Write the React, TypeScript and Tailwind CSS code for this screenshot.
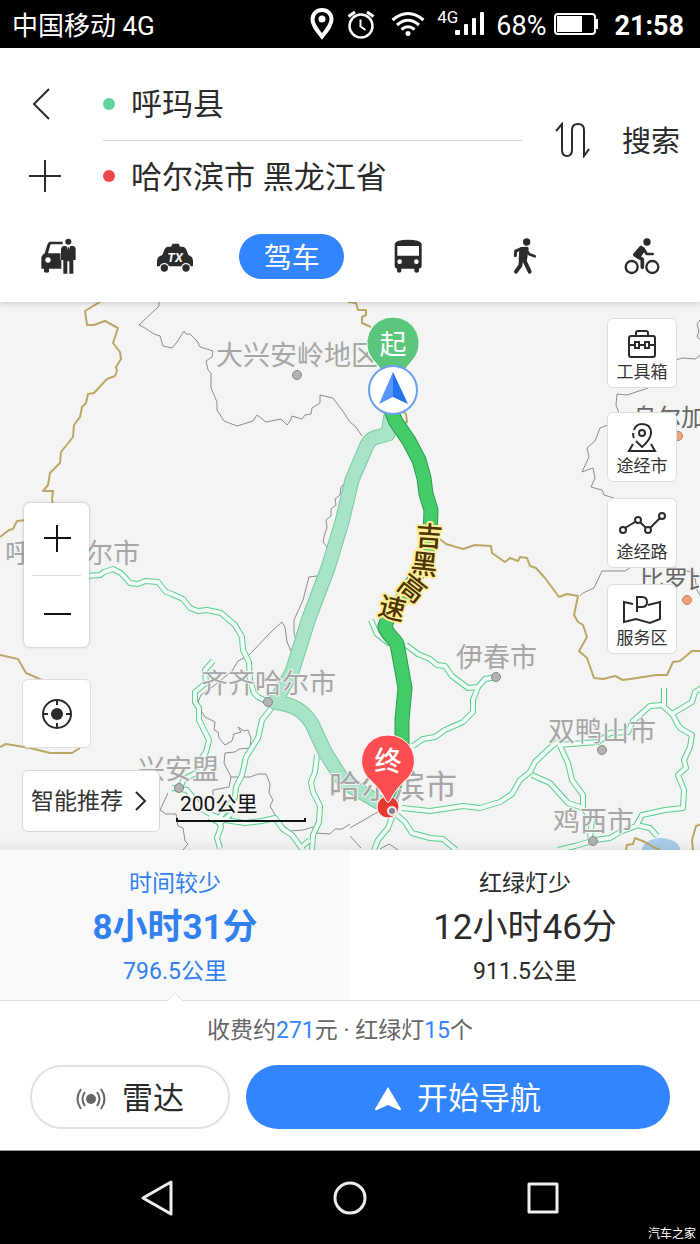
import { useState } from "react";
import type { ReactNode } from "react";

/* ================= TYPES ================= */

type Point = {
  x: number;
  y: number;
};

type CityLabel = Point & {
  name: string;
  size?: "lg" | "sm";
};

/* ================= MAP DATA ================= */

const provinceBorders = [
  "M100 302 85 311 87 325 94 325 105 321 118 328 113 343 120 352 121 359 116 367 117 371 115 376 107 379 94 393 88 394 86 403 82 407 80 417 74 425 73 437 61 452 60 463 50 473 48 485 43 491 53 491 52 500 54 508",
  "M26 520 17 521 13 529 9 530 0 537",
  "M0 655 18 659 26 673 42 680",
  "M0 747 6 744 30 748 50 753 72 753 80 748",
  "M348 302 356 303 358 310 366 310 366 315 362 317 362 323 371 327",
  "M398 408 406 414 407 422 403 424",
  "M436 536 446 544 463 549 475 545 491 546 492 553 505 562 510 558 518 561 520 557 527 558 530 566 536 568 545 578 559 597 567 594 578 596 574 615 578 622 583 625 587 637 579 651 587 658 594 678 603 679 615 676 623 680 637 678 656 675 667 675 673 662 680 661 692 651 700 651",
  "M626 850 627 845 633 844 635 838 645 842 653 847 660 850",
  "M693 850 692 840 696 826 702 824",
];

const cityBorders = [
  "M159 302 159 306 139 325 145 328 154 334 160 336 163 346 172 348 177 342 184 331 186 334 190 334 197 341 200 347 213 351 212 357 206 361 208 370 211 373 211 388 217 402 217 410 224 421 237 426 253 421 257 415 266 422 281 419 287 425 290 421 292 416 302 419 305 415 311 414 312 408 320 403 320 395 333 398 342 410 350 422 356 427 362 436",
  "M345 483 341 487 340 495 335 499 336 505 331 509 331 516 326 520 327 528 325 533 323 542 327 547 328 558",
  "M320 579 317 576 309 577 303 600 294 620 294 633 296 640 291 651 287 642 285 627 282 622 273 630 249 655 238 661 232 671 215 685 201 695 197 704 205 717 215 722 214 730 218 732 219 738 225 745 232 741 234 734 241 732 238 727 244 731 248 730 251 738 250 748 239 749 235 752 225 753 224 763 231 777 250 777 258 774 266 774 270 784 269 793 273 800 270 806 277 818",
  "M231 777 229 787 213 790 213 797",
  "M168 793 160 810 166 814 176 814 178 826 183 828 185 841 188 844 183 850",
  "M283 825 290 831 303 830 313 827 314 833 330 834 335 829 342 829 350 824",
  "M350 836 361 848M380 849 389 844 398 850",
  "M350 828 383 809",
  "M700 320 697 324 699 331 697 337 701 340M702 354 695 359 682 358 676 360",
  "M648 388 627 395 617 394 616 405 619 413",
  "M608 425 600 428 595 441 587 448 589 457 582 472 593 468 595 478 591 487 602 490 604 495 614 498",
  "M633 566 625 571 602 571 594 588 583 593 580 596M672 566 680 570 694 572 697 590 701 597",
];

const roads = [
  "M86 576 100 575 104 572 113 569 121 573 130 583 138 584 145 581 158 582 166 592 172 594 183 599 190 608 198 611 207 610 221 613 235 625 242 637 243 650 249 662 250 680 254 693 258 697 268 702",
  "M213 661 205 670 206 683 195 692 195 702 199 708 199 720 209 740 206 752 199 762 202 770 184 779 179 790",
  "M273 706 262 720 258 738 246 757 242 775 236 787 235 797 225 811 218 819 221 827 217 838 220 848",
  "M317 755 315 772 311 782 313 792 320 806 319 822 313 835 312 850",
  "M172 788 187 790 195 800 200 808 212 815 225 820 245 823 262 821 275 818 283 829 292 835 303 850",
  "M209 817 220 823 231 814M310 840 300 848",
  "M406 645 418 654 430 659 437 665 445 666 452 676 468 688 478 687 485 679 497 677",
  "M478 687 473 700 473 712 463 722 445 730 435 737 423 739 413 746",
  "M402 808 430 811 463 806 480 808 500 802 512 794 520 780 530 772 535 762 552 746 558 742",
  "M558 745 598 742 610 733 628 732 633 721 650 706 662 705 672 714 680 728 692 735 690 747 684 760 686 768 678 775 684 790 683 808 665 810 642 815 636 826 620 832 610 838 595 840 575 846 558 850",
  "M664 706 664 688M672 714 692 702 695 692 702 688",
  "M532 775 550 783 568 803 583 808",
  "M560 746 568 763 572 780 583 795 583 808 592 820 590 838",
  "M636 825 650 828 657 836",
  "M397 815 405 822 412 833 430 838 443 839 456 850",
  "M392 817 388 828 378 840 374 850",
  "M371 620 377 634 390 644",
];

const alternateRoute =
  "M391 415 388 434C376 438 372 436 367 445L352 480 342 522 328 568 309 618 292 672 275 702C292 705 302 708 312 724L325 752 344 782 380 803";

const mainRoute =
  "M391 410 396 422 409 441 419 460 424 478 426 494 431 510 430 535 426 560 405 595 388 618 385 626C386 634 394 638 397 644L400 660 405 688 402 720 402 752 390 804";

const cityLabels: CityLabel[] = [
  { name: "大兴安岭地区", x: 216, y: 365 },
  { name: "呼伦贝尔市", x: 5, y: 563 },
  { name: "齐齐哈尔市", x: 201, y: 693 },
  { name: "兴安盟", x: 138, y: 779 },
  { name: "伊春市", x: 456, y: 667 },
  { name: "双鸭山市", x: 548, y: 741 },
  { name: "鸡西市", x: 553, y: 831 },
  { name: "哈尔滨市", x: 329, y: 798, size: "lg" },
];

const foreignLabels: CityLabel[] = [
  { name: "乌尔加", x: 633, y: 426 },
  { name: "比罗比", x: 640, y: 588 },
];

const cityDots: Point[] = [
  { x: 297, y: 375 },
  { x: 268, y: 702 },
  { x: 179, y: 788 },
  { x: 496, y: 677 },
  { x: 602, y: 750 },
  { x: 593, y: 841 },
];

const foreignDots: Point[] = [
  { x: 678, y: 436 },
  { x: 687, y: 600 },
];

const highwayLabel = [
  { char: "吉", x: 429, y: 537, angle: 4 },
  { char: "黑", x: 424, y: 565, angle: 6 },
  { char: "高", x: 412, y: 589, angle: 38 },
  { char: "速", x: 392, y: 609, angle: 14 },
];

/* ================= STATUS BAR ================= */

const StatusBar = () => (
  <div className="flex h-12 shrink-0 items-center bg-black pr-4 pl-3 font-normal text-white">
    <span className="flex-1 pt-1 text-[26px]">中国移动 4G</span>

    <svg width="26" height="34" viewBox="0 0 26 34" fill="none">
      <path
        d="M13 3C7.500 3 3.500 7 3.500 12.300 3.500 18 8 23 13 29.500 18 23 22.500 18 22.500 12.300 22.500 7 18.500 3 13 3Z"
        stroke="white"
        strokeWidth="4"
      />
      <circle cx="13" cy="12" r="3.500" fill="white" />
    </svg>

    <svg className="ml-3" width="28" height="30" viewBox="0 0 28 30" fill="none" stroke="white">
      <circle cx="14" cy="17" r="11.500" strokeWidth="2.500" />
      <path d="M13.500 10.500V17.500L18.500 21" strokeWidth="2" />
      <path d="M1.500 7.500 8 3M26.500 7.500 20 3" strokeWidth="3" />
    </svg>

    <svg className="ml-4" width="34" height="26" viewBox="0 0 34 26" fill="none" stroke="white">
      <path d="M1.500 9Q17-4 32.500 9" strokeWidth="3" />
      <path d="M6 14Q17 4.500 28 14" strokeWidth="3" />
      <path d="M10.500 18.500Q17 13 23.500 18.500" strokeWidth="3" />
      <circle cx="17" cy="22.500" r="2.500" fill="white" stroke="none" />
    </svg>

    <div className="ml-3 flex">
      <span className="-mr-1 text-[17px] leading-3">4G</span>
      <svg width="30" height="26" viewBox="0 0 30 26" fill="white">
        <rect x="1" y="19" width="5" height="5" rx="1" />
        <rect x="10" y="13" width="4" height="11" rx="1" />
        <rect x="18" y="7" width="4" height="17" rx="1" />
        <rect x="26" y="1" width="4" height="23" rx="1" />
      </svg>
    </div>

    <span className="ml-3 pt-1 text-[27px]">68%</span>

    <svg className="ml-2" width="44" height="24" viewBox="0 0 44 24">
      <rect x="1" y="2" width="40" height="20" rx="3" fill="none" stroke="white" strokeWidth="2" />
      <rect x="3" y="4" width="25" height="16" fill="white" />
      <rect x="41" y="7" width="3" height="10" fill="white" />
    </svg>

    <span className="ml-4 pt-1 text-[27px] font-bold">21:58</span>
  </div>
);

/* ================= TRAVEL MODE ICONS ================= */

const PickupIcon = () => (
  <svg width="38" height="38" viewBox="116 262 114 114" fill="#2b2b2b">
    <path d="M147 276H187V284H151L143 311H183V357H146V367Q140 372 131 367V357H123V324Q123 318 133 311L142 282Z" />
    <circle cx="143" cy="331" r="8" fill="white" />
    <circle cx="204" cy="276" r="13" fill="white" />
    <circle cx="204" cy="276" r="9" />
    <path d="M191 289H217Q226 290 226 299V331H219V372H207V335H201V372H189V331H182V299Q183 290 191 289Z" stroke="white" strokeWidth="3" paintOrder="stroke" />
    <path d="M198 289 204 305 210 289Z" fill="white" />
    <path d="M202 293H206V303H202Z" />
  </svg>
);

const TaxiIcon = () => (
  <svg width="38" height="38" viewBox="468 262 114 114" fill="#2b2b2b">
    <path d="M518 282H536L540 291H549Q556 292 559 300L565 316Q579 321 579 334V350H471V334Q471 321 487 316L493 300Q496 292 503 291H513Z" />
    <circle cx="493" cy="355" r="15" fill="white" />
    <circle cx="558" cy="355" r="15" fill="white" />
    <circle cx="493" cy="355" r="11" />
    <circle cx="558" cy="355" r="11" />
    <text x="525" y="336" textAnchor="middle" fill="white" fontSize="38" className="font-bold italic">
      TX
    </text>
  </svg>
);

const BusIcon = () => (
  <svg width="38" height="38" viewBox="118 262 114 114" fill="#2b2b2b">
    <path
      fillRule="evenodd"
      d="M135 282Q140 270 175 270 211 270 216 282V350Q216 355 208 357V364Q208 369 201 369 194 369 194 364V357H155V364Q155 369 148 369 142 369 142 364V357Q135 355 135 350ZM143 289V318H208V289Z"
    />
    <circle cx="150" cy="336" r="7" fill="white" />
    <circle cx="200" cy="336" r="7" fill="white" />
  </svg>
);

const WalkIcon = () => (
  <svg
    width="38"
    height="38"
    viewBox="470 262 114 114"
    fill="none"
    stroke="#2b2b2b"
    strokeLinecap="round"
    strokeLinejoin="round"
  >
    <circle cx="532" cy="277" r="11" fill="#2b2b2b" stroke="none" />
    <path d="M516 298 532 297 527 330 514 330Z" fill="#2b2b2b" strokeWidth="12" />
    <path d="M517 297 499 304 498 318" strokeWidth="9" />
    <path d="M531 301 540 314 556 320" strokeWidth="8" />
    <path d="M515 332 513 348 500 366M525 332 541 366" strokeWidth="12" />
  </svg>
);

const BikeIcon = () => (
  <svg
    width="38"
    height="38"
    viewBox="818 262 114 114"
    fill="none"
    stroke="#2b2b2b"
    strokeLinecap="round"
    strokeLinejoin="round"
  >
    <circle cx="890" cy="277" r="11" fill="#2b2b2b" stroke="none" />
    <circle cx="844" cy="352" r="18" strokeWidth="7" />
    <circle cx="906" cy="352" r="18" strokeWidth="7" />
    <path d="M872 293 853 315 865 322 880 301Z" fill="#2b2b2b" strokeWidth="10" />
    <path d="M879 296 889 313H907" strokeWidth="8" />
    <path d="M856 317 876 329V353" strokeWidth="11" />
  </svg>
);

const travelModes: { id: string; icon?: ReactNode; text?: string }[] = [
  { id: "pickup", icon: <PickupIcon /> },
  { id: "taxi", icon: <TaxiIcon /> },
  { id: "drive", text: "驾车" },
  { id: "bus", icon: <BusIcon /> },
  { id: "walk", icon: <WalkIcon /> },
  { id: "bike", icon: <BikeIcon /> },
];

/* ================= SEARCH HEADER ================= */

const SearchHeader = () => {
  const [origin, setOrigin] = useState("呼玛县");
  const [destination, setDestination] = useState("哈尔滨市 黑龙江省");

  const swapPlaces = () => {
    setOrigin(destination);
    setDestination(origin);
  };

  return (
    <header className="relative z-10 shrink-0 bg-white pt-5 text-[#2b2b2b] shadow-[0_1px_6px_rgba(0,0,0,0.2)]">
      <div className="flex h-[144px] items-center pr-5">
        <div className="flex h-full w-[103px] flex-col pl-7">
          <button aria-label="返回" className="flex flex-1 items-center">
            <svg width="30" height="34" viewBox="0 0 30 34" fill="none" stroke="#2b2b2b" strokeWidth="2">
              <path d="M21 2 6 17 21 32" />
            </svg>
          </button>
          <button aria-label="添加途经点" className="flex flex-1 items-center">
            <svg width="34" height="34" viewBox="0 0 34 34" fill="none" stroke="#2b2b2b" strokeWidth="2">
              <path d="M17 1V33M1 17H33" />
            </svg>
          </button>
        </div>

        <div className="flex h-full min-w-0 flex-1 flex-col text-[31px]">
          <label className="flex flex-1 items-center gap-4 border-b border-[#d6d6d6]">
            <span className="h-3 w-3 shrink-0 rounded-full bg-[#66d19e]" />
            <input
              aria-label="起点"
              className="w-full min-w-0 pt-[3px] outline-none"
              value={origin}
              onChange={(e) => setOrigin(e.target.value)}
            />
          </label>
          <label className="flex flex-1 items-center gap-4">
            <span className="h-3 w-3 shrink-0 rounded-full bg-[#f04848]" />
            <input
              aria-label="终点"
              className="w-full min-w-0 pt-[3px] outline-none"
              value={destination}
              onChange={(e) => setDestination(e.target.value)}
            />
          </label>
        </div>

        <button aria-label="交换起终点" className="ml-8" onClick={swapPlaces}>
          <svg width="36" height="36" viewBox="0 0 36 36" fill="none" stroke="#2b2b2b" strokeWidth="2">
            <path d="M2 9 8 2V28Q8 34 13 34 18 34 18 28V8Q18 2 24 2 30 2 30 8V34L35 27" />
          </svg>
        </button>
        <button className="ml-8 pt-1.5 text-[29px]">搜索</button>
      </div>

      <nav className="grid h-[90px] grid-cols-6 items-center justify-items-center pb-0.5">
        {travelModes.map((mode) =>
          mode.text ? (
            <button
              key={mode.id}
              className="h-[45px] w-[105px] rounded-full bg-[#3385ff] pt-1.5 text-[28px] leading-none text-white"
            >
              {mode.text}
            </button>
          ) : (
            <button key={mode.id} aria-label={mode.id}>
              {mode.icon}
            </button>
          )
        )}
      </nav>
    </header>
  );
};

/* ================= MAP CANVAS ================= */

const MapCanvas = () => (
  <svg
    className="absolute inset-0 h-full w-full"
    viewBox="0 302 700 548"
    preserveAspectRatio="xMidYMid slice"
    fill="none"
    strokeLinejoin="round"
  >
    <ellipse cx="661" cy="850" rx="19" ry="12" fill="#a9cdea" />

    {cityBorders.map((d) => (
      <path key={d} d={d} stroke="#8c8c8c" strokeWidth="1" />
    ))}
    {provinceBorders.map((d) => (
      <path key={d} d={d} stroke="#b9a865" strokeWidth="2" />
    ))}

    {/* DOUBLE LINE ROADS */}
    {roads.map((d) => (
      <path key={d} d={d} stroke="#55cf8c" strokeWidth="6" />
    ))}
    {roads.map((d) => (
      <path key={d} d={d} stroke="#f4faf6" strokeWidth="4" />
    ))}

    {/* ROUTES */}
    <path d={alternateRoute} stroke="#7cc8a4" strokeWidth="15" />
    <path d={alternateRoute} stroke="#a8e4c6" strokeWidth="13" />
    <path d={mainRoute} stroke="#2c9a52" strokeWidth="15" />
    <path d={mainRoute} stroke="#44cc6a" strokeWidth="13" />

    {/* CITIES */}
    {cityDots.map((dot) => (
      <circle key={dot.x} cx={dot.x} cy={dot.y} r="4.500" fill="#b3b3b3" stroke="#858585" />
    ))}
    {foreignDots.map((dot) => (
      <circle key={dot.x} cx={dot.x} cy={dot.y} r="4.500" fill="#f0a478" stroke="#b98060" />
    ))}
    {cityLabels.map((label) => (
      <text
        key={label.name}
        x={label.x}
        y={label.y}
        fill="#a6a6a6"
        stroke="#f4f4f4"
        strokeWidth="2"
        paintOrder="stroke"
        className={label.size === "lg" ? "text-[32px]" : "text-[27px]"}
      >
        {label.name}
      </text>
    ))}
    {foreignLabels.map((label) => (
      <text
        key={label.name}
        x={label.x}
        y={label.y}
        fill="#666666"
        stroke="#f4f4f4"
        strokeWidth="2"
        paintOrder="stroke"
        className="text-[24px]"
      >
        {label.name}
      </text>
    ))}

    {/* HIGHWAY NAME */}
    {highwayLabel.map((item) => (
      <text
        key={item.char}
        x={item.x}
        y={item.y}
        transform={`rotate(${item.angle} ${item.x} ${item.y})`}
        textAnchor="middle"
        dominantBaseline="central"
        fill="#4d3500"
        stroke="#ffee99"
        strokeWidth="4"
        paintOrder="stroke"
        className="text-[27px] font-medium"
      >
        {item.char}
      </text>
    ))}

    {/* START */}
    <path
      d="M393 317A26 26 0 0 0 374 361L393 384 412 361A26 26 0 0 0 393 317Z"
      fill="#5cc77c"
      stroke="white"
    />
    <text x="393" y="354" textAnchor="middle" fill="white" className="text-[27px]">
      起
    </text>
    <circle cx="393" cy="390" r="24" fill="white" stroke="#6b9fec" strokeWidth="2" />
    <path d="M393 372V397L379 404Z" fill="#5795fb" />
    <path d="M393 372V397L408 404Z" fill="#2673f0" />

    {/* END */}
    <circle cx="388" cy="807" r="11" fill="#e8382f" stroke="white" />
    <circle cx="392" cy="811" r="4" fill="#8a7d8c" stroke="#eeeeee" strokeWidth="2" />
    <path
      d="M388 735A26 26 0 0 0 367 777Q381 789 386 801 388 804 390 801 395 789 409 777A26 26 0 0 0 388 735Z"
      fill="#fc4d50"
      stroke="white"
    />
    <text x="388" y="771" textAnchor="middle" fill="white" className="text-[27px] font-medium">
      终
    </text>

    {/* SCALE */}
    <text
      x="180"
      y="811"
      fill="#111111"
      stroke="#f4f4f4"
      strokeWidth="3"
      paintOrder="stroke"
      className="text-[21px]"
    >
      200公里
    </text>
    <path d="M177 818V821H305V818" stroke="#111111" strokeWidth="2" strokeLinejoin="miter" />
  </svg>
);

/* ================= MAP TOOLS ================= */

const ToolboxIcon = () => (
  <svg width="36" height="32" viewBox="0 0 36 32" fill="none" stroke="#2b2b2b" strokeWidth="2">
    <rect x="5" y="8" width="26" height="21" rx="2" />
    <path d="M12 8V5Q12 3 14 3H22Q24 3 24 5V8M5 17H11M15 17H21M25 17H31" />
    <rect x="11" y="14" width="4" height="6" />
    <rect x="21" y="14" width="4" height="6" />
  </svg>
);

const ViaCityIcon = () => (
  <svg width="36" height="32" viewBox="0 0 36 32" fill="none" stroke="#2b2b2b" strokeWidth="2">
    <path d="M10 8Q12 2 18 2 27 2 27 11 27 17 18 25L12 19M9 11Q9 14 10 16" />
    <circle cx="18" cy="11" r="3" />
    <path d="M9 22 5 29H31L27 22" />
  </svg>
);

const ViaRoadIcon = () => (
  <svg width="48" height="32" viewBox="0 0 48 32" fill="none" stroke="#2b2b2b" strokeWidth="2">
    <circle cx="5" cy="22" r="3" />
    <circle cx="20" cy="12" r="3" />
    <circle cx="30" cy="22" r="3" />
    <circle cx="44" cy="8" r="3" />
    <path d="M7 20 17 14M22 14 28 20M32 20 42 10" />
  </svg>
);

const ServiceIcon = () => (
  <svg width="42" height="32" viewBox="0 0 42 32" fill="none" stroke="#2b2b2b" strokeWidth="2">
    <path d="M12 10 3 8V28L15 25 29 29 39 25V8L27 11" />
    <path d="M16 18V3H21Q26 3 26 8 26 13 21 13H16" />
  </svg>
);

const mapTools = [
  { label: "工具箱", icon: <ToolboxIcon /> },
  { label: "途经市", icon: <ViaCityIcon /> },
  { label: "途经路", icon: <ViaRoadIcon /> },
  { label: "服务区", icon: <ServiceIcon /> },
];

const MapSection = () => (
  <main className="relative min-h-[548px] flex-1 overflow-hidden bg-[#f4f4f4]">
    <MapCanvas />

    {/* RIGHT SIDE */}
    <div className="absolute top-4 right-[23px] flex flex-col gap-4">
      {mapTools.map((tool) => (
        <button
          key={tool.label}
          className="flex h-[70px] w-[70px] flex-col items-center justify-center gap-0.5 rounded-md border border-[#dddddd] bg-white pt-1 text-[17px] leading-5 text-[#333333] first:mb-2"
        >
          {tool.icon}
          {tool.label}
        </button>
      ))}
    </div>

    {/* LEFT SIDE */}
    <div className="absolute bottom-[18px] left-[22px] flex flex-col items-start">
      <div className="ml-[2px] flex h-[144px] w-[65px] flex-col rounded-md bg-white px-2 shadow-[0_0_3px_rgba(0,0,0,0.3)]">
        <button aria-label="放大" className="flex flex-1 items-center justify-center border-b border-[#dddddd]">
          <svg width="28" height="28" viewBox="0 0 28 28" stroke="#111111" strokeWidth="2">
            <path d="M14 0V27M1 13H28" />
          </svg>
        </button>
        <button aria-label="缩小" className="flex flex-1 items-center justify-center">
          <svg width="28" height="28" viewBox="0 0 28 28" stroke="#111111" strokeWidth="2">
            <path d="M1 17H28" />
          </svg>
        </button>
      </div>

      <button
        aria-label="定位"
        className="mt-8 flex h-[69px] w-[69px] items-center justify-center rounded-md border border-[#dddddd] bg-white"
      >
        <svg width="32" height="32" viewBox="0 0 32 32" fill="none" stroke="#2b2b2b" strokeWidth="2">
          <circle cx="16" cy="16" r="14" />
          <circle cx="16" cy="16" r="6" fill="#2b2b2b" stroke="none" />
          <path d="M16 2V7M16 25V30M2 16H7M25 16H30" />
        </svg>
      </button>

      <button className="mt-[22px] flex h-[62px] w-[138px] items-center gap-2.5 rounded-md border border-[#d8d8d8] bg-white pl-2 text-[23px] text-[#333333]">
        <span className="pt-0.5">智能推荐</span>
        <svg width="14" height="22" viewBox="0 0 14 22" fill="none" stroke="#2b2b2b" strokeWidth="2">
          <path d="M3 2 12 11 3 20" />
        </svg>
      </button>
    </div>

    <div className="absolute inset-x-0 bottom-0 h-3 bg-gradient-to-t from-black/5 to-transparent" />
  </main>
);

/* ================= ROUTE PANEL ================= */

const routeOptions = [
  { label: "时间较少", time: "8小时31分", distance: "796.5公里" },
  { label: "红绿灯少", time: "12小时46分", distance: "911.5公里" },
];

const RoutePanel = () => {
  const [active, setActive] = useState(0);

  return (
    <section className="shrink-0 border-b border-[#999999] bg-white text-[23px]">
      <div className="grid grid-cols-2 border-b border-[#e0e0e0]">
        {routeOptions.map((option, index) => (
          <button
            key={option.label}
            onClick={() => setActive(index)}
            className={`relative flex h-[150px] flex-col items-center justify-center pt-[5px] leading-8 ${
              index === active ? "bg-[#f8f9f9] text-[#3280f0]" : "text-[#2b2b2b]"
            }`}
          >
            <span>{option.label}</span>
            <span
              className={`my-1 text-[35px] leading-[48px] ${index === active ? "font-bold" : ""}`}
            >
              {option.time}
            </span>
            <span>{option.distance}</span>

            {index === active && (
              <svg
                className="absolute -bottom-px left-1/2 -translate-x-1/2"
                width="16"
                height="9"
                viewBox="0 0 16 9"
              >
                <path d="M0 9 8 1 16 9" fill="white" stroke="#e0e0e0" />
              </svg>
            )}
          </button>
        ))}
      </div>

      <p className="pt-[14px] pr-5 text-center leading-8 text-[#666666]">
        收费约<span className="text-[#3385ff]">271</span>元 · 红绿灯
        <span className="text-[#3385ff]">15</span>个
      </p>

      <div className="flex gap-4 px-[30px] pt-[18px] pb-[21px] text-[31px] leading-none">
        <button className="flex h-16 w-[200px] items-center justify-center gap-4 rounded-full border-2 border-[#e2e2e2] pt-[3px] text-[#2b2b2b]">
          <svg width="30" height="24" viewBox="0 0 30 24" fill="none" stroke="#666666" strokeWidth="2">
            <circle cx="15" cy="12" r="5" fill="#666666" stroke="none" />
            <path d="M9 5Q4 12 9 19M21 5Q26 12 21 19M5 2Q-2 12 5 22M25 2Q32 12 25 22" />
          </svg>
          雷达
        </button>
        <button className="flex h-16 flex-1 items-center justify-center gap-4 rounded-full bg-[#3385ff] pt-[3px] text-white">
          <svg width="26" height="26" viewBox="0 0 26 26" fill="white">
            <path d="M13 1 26 23Q26 25 24 24L13 19 2 24Q0 25 0 23Z" />
          </svg>
          开始导航
        </button>
      </div>
    </section>
  );
};

/* ================= SYSTEM NAVIGATION ================= */

const SystemNav = () => (
  <footer className="relative h-[93px] shrink-0 bg-black">
    <div className="grid h-full grid-cols-3 items-center justify-items-center px-[60px]">
      <button aria-label="后退">
        <svg width="36" height="40" viewBox="0 0 36 40" fill="none" stroke="#eeeeee" strokeWidth="3" strokeLinejoin="round">
          <path d="M32 4V36L4 20Z" />
        </svg>
      </button>
      <button aria-label="主屏幕">
        <svg width="36" height="36" viewBox="0 0 36 36" fill="none" stroke="#eeeeee" strokeWidth="3">
          <circle cx="18" cy="18" r="15" />
        </svg>
      </button>
      <button aria-label="最近任务">
        <svg width="32" height="32" viewBox="0 0 32 32" fill="none" stroke="#eeeeee" strokeWidth="3" strokeLinejoin="round">
          <rect x="2" y="2" width="28" height="28" />
        </svg>
      </button>
    </div>
    <span className="absolute right-1 bottom-0 text-[12px] leading-5 text-white">汽车之家</span>
  </footer>
);

/* ================= PAGE ================= */

const App = () => {
  return (
    <div className="flex min-h-screen flex-col bg-white font-['Roboto','Noto_Sans_CJK_SC',sans-serif]">
      <StatusBar />
      <SearchHeader />
      <MapSection />
      <RoutePanel />
      <SystemNav />
    </div>
  );
};

export default App;
